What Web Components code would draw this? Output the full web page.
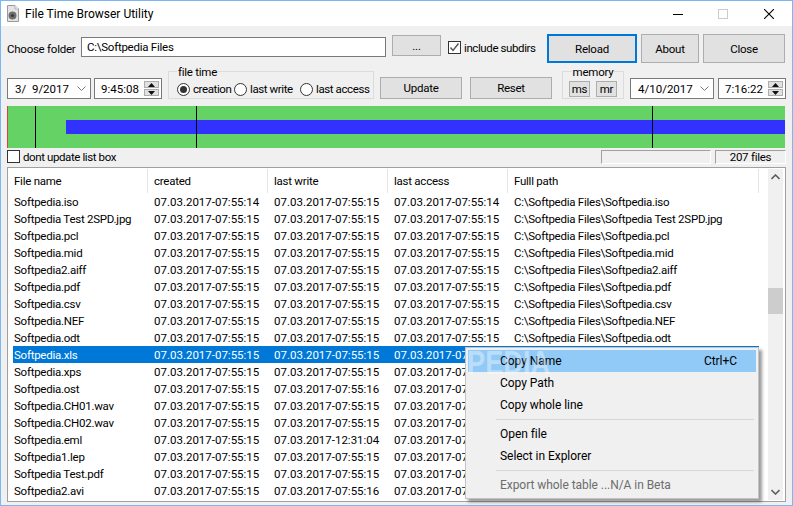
<!DOCTYPE html>
<html>
<head>
<meta charset="utf-8">
<title>File Time Browser Utility</title>
<style>
  html, body { margin: 0; padding: 0; background: #f0f0f0; }
  body { font: 11.5px Roboto, "Noto Sans", sans-serif; letter-spacing: -.25px; color: #000; }
</style>
</head>
<body>

<app-window>
  <title-bar slot="title">File Time Browser Utility</title-bar>

  <tool-row style="--top: 8px; --height: 29px">
    <span style="flex: none; width: 74px; align-self: center; white-space: nowrap">Choose folder</span>
    <text-field value="C:\Softpedia Files" style="width: 305px; height: 20px; margin-top: 3px"></text-field>
    <win-button style="width: 49px; height: 21px; margin: 1px 0 0 6px">...</win-button>
    <check-box checked style="margin: 7px 0 0 7px; width: 99px">include subdirs</check-box>
    <win-button focused style="width: 90px; height: 29px">Reload</win-button>
    <win-button style="width: 58px; height: 29px; margin-left: 4px">About</win-button>
    <win-button style="width: 82px; height: 29px; margin-left: 4px">Close</win-button>
  </tool-row>

  <tool-row style="--top: 8px; --height: 29px">
    <date-field value="3/  9/2017" style="margin-top: 7px"></date-field>
    <time-field value="9:45:08" style="margin: 7px 0 0 3px"></time-field>
    <group-box label="file time" style="width: 206px; margin: 0 0 1px 6px">
      <radio-button checked style="width: 57px">creation</radio-button>
      <radio-button style="width: 66px">last write</radio-button>
      <radio-button>last access</radio-button>
    </group-box>
    <win-button style="width: 82px; height: 22px; margin: 6px 0 0 6px">Update</win-button>
    <win-button style="width: 82px; height: 22px; margin: 6px 0 0 8px">Reset</win-button>
    <group-box label="memory" center style="width: 62px; margin: 0 0 1px 10px">
      <win-button style="width: 21px; height: 16px">ms</win-button>
      <win-button style="width: 21px; height: 16px; margin-left: 6px">mr</win-button>
    </group-box>
    <date-field value="4/10/2017" style="margin: 7px 0 0 6px"></date-field>
    <time-field value="7:16:22" style="margin: 7px 0 0 4px"></time-field>
  </tool-row>

  <time-line style="margin-top: 6px"></time-line>

  <tool-row style="--top: 2px; --height: 14px">
    <check-box style="width: 594px">dont update list box</check-box>
    <status-box style="width: 110px"></status-box>
    <status-box style="width: 71px; margin-left: 4px">207 files</status-box>
  </tool-row>

  <file-table></file-table>

  <context-menu></context-menu>
  <water-mark>PEDIA</water-mark>
</app-window>

<script>
class AppWindow extends HTMLElement {
  constructor() {
    super();
    this.attachShadow({mode: 'open'}).innerHTML = `
      <style>
        :host {
          display: block;
          position: relative;
          box-sizing: border-box;
          width: 793px;
          height: 506px;
          overflow: hidden;
          border: 1px solid #79b8f4;
          background: #f0f0f0;
        }
        .client { padding: 0 6px; }
      </style>
      <slot name="title"></slot>
      <div class="client"><slot></slot></div>
    `;
  }
}

class TitleBar extends HTMLElement {
  constructor() {
    super();
    this.attachShadow({mode: 'open'}).innerHTML = `
      <style>
        :host {
          display: flex;
          align-items: center;
          height: 25px;
          background: #fff;
          font-size: 12px;
          letter-spacing: 0;
        }
        .icon { margin-left: 5px; width: 13px; height: 17px; }
        .text { margin-left: 6px; flex: 1; }
        .ctl { width: 46px; height: 25px; display: flex; align-items: center; justify-content: center; }
      </style>
      <svg class="icon" viewBox="0 0 13 17">
        <path d="M1.5.5H9L12.5 4V16.5H1.5Z" fill="#e4e4e4" stroke="#9a9a9a"/>
        <path d="M9 .5V4H12.5" fill="#f5f5f5" stroke="#b4b4b4"/>
        <circle cx="6.5" cy="10.5" r="4" fill="#6f6f6f"/>
        <circle cx="6.5" cy="10.5" r="1.6" fill="#3c3c3c"/>
      </svg>
      <span class="text"><slot></slot></span>
      <div class="ctl" style="margin-right:-1px"><svg width="10" height="10"><path d="M0 5.5H10" stroke="#000"/></svg></div>
      <div class="ctl"><svg width="10" height="10"><rect x=".5" y=".5" width="9" height="9" fill="none" stroke="#ccc"/></svg></div>
      <div class="ctl"><svg width="10" height="10"><path d="M0 0L10 10M10 0L0 10" stroke="#000" stroke-width="1.1"/></svg></div>
    `;
  }
}

class ToolRow extends HTMLElement {
  constructor() {
    super();
    this.attachShadow({mode: 'open'}).innerHTML = `
      <style>
        :host {
          display: flex;
          align-items: flex-start;
          margin-top: var(--top, 0);
          height: var(--height, auto);
        }
      </style>
      <slot></slot>
    `;
  }
}

class WinButton extends HTMLElement {
  constructor() {
    super();
    this.attachShadow({mode: 'open'}).innerHTML = `
      <style>
        :host {
          display: flex;
          align-items: center;
          justify-content: center;
          flex: none;
          box-sizing: border-box;
          background: #e1e1e1;
          border: 1px solid #adadad;
        }
        :host([focused]) { border: 2px solid #0078d7; }
      </style>
      <slot></slot>
    `;
  }
}

class TextField extends HTMLElement {
  constructor() {
    super();
    this.attachShadow({mode: 'open'}).innerHTML = `
      <style>
        :host {
          display: flex;
          align-items: center;
          flex: none;
          box-sizing: border-box;
          padding-left: 5px;
          background: #fff;
          border: 1px solid #7a7a7a;
        }
      </style>
      <span>${this.getAttribute('value')}</span>
    `;
  }
}

class CheckBox extends HTMLElement {
  constructor() {
    super();
    const tick = this.hasAttribute('checked')
      ? '<path d="M2.5 6.5L5 9.5L10.5 2.5" fill="none" stroke="#555" stroke-width="1.4"/>' : '';
    this.attachShadow({mode: 'open'}).innerHTML = `
      <style>
        :host { display: flex; align-items: center; flex: none; white-space: nowrap; height: 13px; letter-spacing: -.4px; }
        svg { flex: none; margin-right: 3px; }
      </style>
      <svg width="13" height="13"><rect x=".5" y=".5" width="12" height="12" fill="#fff" stroke="#333"/>${tick}</svg>
      <span><slot></slot></span>
    `;
  }
}

class RadioButton extends HTMLElement {
  constructor() {
    super();
    const dot = this.hasAttribute('checked') ? '<circle cx="6.5" cy="6.5" r="3.5" fill="#333"/>' : '';
    this.attachShadow({mode: 'open'}).innerHTML = `
      <style>
        :host { display: flex; align-items: center; flex: none; white-space: nowrap; height: 13px; letter-spacing: -.4px; }
        svg { flex: none; margin-right: 3px; }
      </style>
      <svg width="13" height="13"><circle cx="6.5" cy="6.5" r="6" fill="#fff" stroke="#333"/>${dot}</svg>
      <span><slot></slot></span>
    `;
  }
}

class GroupBox extends HTMLElement {
  constructor() {
    super();
    const justify = this.hasAttribute('center') ? 'center' : 'flex-start';
    const legend = this.hasAttribute('center') ? 'margin: 0 auto' : 'margin-left: 8px';
    this.attachShadow({mode: 'open'}).innerHTML = `
      <style>
        :host {
          display: block;
          flex: none;
          box-sizing: border-box;
          height: 28px;
          border: 1px solid #dcdcdc;
        }
        .legend {
          display: block;
          width: max-content;
          ${legend};
          margin-top: -7px;
          padding: 0 1px;
          height: 14px;
          line-height: 14px;
          background: #f0f0f0;
        }
        .body {
          display: flex;
          align-items: center;
          justify-content: ${justify};
          height: 16px;
          margin-top: 2px;
          padding-left: 8px;
        }
        :host([center]) .body { padding-left: 0; }
      </style>
      <span class="legend">${this.getAttribute('label')}</span>
      <div class="body"><slot></slot></div>
    `;
  }
}

class SpinBox extends HTMLElement {
  constructor() {
    super();
    this.attachShadow({mode: 'open'}).innerHTML = `
      <style>
        :host { display: flex; flex-direction: column; gap: 1px; flex: none; width: 15px; height: 15px; }
        div { flex: 1; background: #e1e1e1; border: 1px solid #adadad; display: flex; align-items: center; justify-content: center; box-sizing: border-box; }
      </style>
      <div><svg width="7" height="4"><path d="M3.5 0L7 4H0Z" fill="#111"/></svg></div>
      <div><svg width="7" height="4"><path d="M0 0H7L3.5 4Z" fill="#111"/></svg></div>
    `;
  }
}

class DateField extends HTMLElement {
  constructor() {
    super();
    this.attachShadow({mode: 'open'}).innerHTML = `
      <style>
        :host {
          display: flex;
          align-items: center;
          flex: none;
          box-sizing: border-box;
          width: 84px;
          height: 21px;
          padding-left: 7px;
          background: #fff;
          border: 1px solid #7a7a7a;
          letter-spacing: 0;
        }
        span { flex: 1; white-space: pre; }
        svg { margin-right: 4px; }
      </style>
      <span>${this.getAttribute('value')}</span>
      <svg width="9" height="6"><path d="M.5 .5L4.5 4.5L8.5 .5" fill="none" stroke="#777"/></svg>
    `;
  }
}

class TimeField extends HTMLElement {
  constructor() {
    super();
    this.attachShadow({mode: 'open'}).innerHTML = `
      <style>
        :host {
          display: flex;
          align-items: center;
          flex: none;
          box-sizing: border-box;
          width: 68px;
          height: 21px;
          padding: 0 2px 0 6px;
          background: #fff;
          border: 1px solid #7a7a7a;
          letter-spacing: 0;
        }
        span { flex: 1; }
      </style>
      <span>${this.getAttribute('value')}</span>
      <spin-box></spin-box>
    `;
  }
}

class TimeLine extends HTMLElement {
  constructor() {
    super();
    this.attachShadow({mode: 'open'}).innerHTML = `
      <style>
        :host {
          display: block;
          position: relative;
          width: 778px;
          height: 42px;
          background: #64d264;
        }
        .span { position: absolute; left: 59px; right: 0; top: 14px; height: 14px; background: #3232ff; }
        .tick { position: absolute; top: 0; width: 1px; height: 42px; background: #000; }
      </style>
      <div class="span"></div>
      <div class="tick" style="left: 0; background: #e04040"></div>
      <div class="tick" style="left: 28px"></div>
      <div class="tick" style="left: 189px"></div>
      <div class="tick" style="left: 645px"></div>
    `;
  }
}

class StatusBox extends HTMLElement {
  constructor() {
    super();
    this.attachShadow({mode: 'open'}).innerHTML = `
      <style>
        :host {
          display: flex;
          align-items: center;
          justify-content: center;
          flex: none;
          box-sizing: border-box;
          height: 14px;
          border: 1px solid;
          border-color: #a0a0a0 #fff #fff #a0a0a0;
        }
      </style>
      <slot></slot>
    `;
  }
}

const T1 = '07.03.2017-07:55:14';
const T5 = '07.03.2017-07:55:15';
const T6 = '07.03.2017-07:55:16';
// rows from Softpedia.xls down lie under the context menu: only the start of "last access" shows
const CUT = '07.03.2017-07';
const FILES = [
  ['Softpedia.iso', T1, T5, T1, true],
  ['Softpedia Test 2SPD.jpg', T5, T5, T5, true],
  ['Softpedia.pcl', T5, T5, T5, true],
  ['Softpedia.mid', T5, T5, T5, true],
  ['Softpedia2.aiff', T5, T5, T5, true],
  ['Softpedia.pdf', T5, T5, T5, true],
  ['Softpedia.csv', T5, T5, T5, true],
  ['Softpedia.NEF', T5, T5, T5, true],
  ['Softpedia.odt', T5, T5, T5, true],
  ['Softpedia.xls', T5, T5, CUT],
  ['Softpedia.xps', T5, T5, CUT],
  ['Softpedia.ost', T5, T6, CUT],
  ['Softpedia.CH01.wav', T5, T5, CUT],
  ['Softpedia.CH02.wav', T5, T5, CUT],
  ['Softpedia.eml', T5, '07.03.2017-12:31:04', CUT],
  ['Softpedia1.lep', T5, T5, CUT],
  ['Softpedia Test.pdf', T5, T5, CUT],
  ['Softpedia2.avi', T5, T6, CUT]
];

class FileTable extends HTMLElement {
  constructor() {
    super();
    const rows = FILES.map(([name, created, write, access, path], i) => `
      <div class="line${i === 9 ? ' selected' : ''}">
        <span>${name}</span><span class="t">${created}</span><span class="t">${write}</span><span class="t">${access}</span>
        <span>${path ? `C:\\Softpedia Files\\${name}` : ''}</span>
      </div>`).join('');
    this.attachShadow({mode: 'open'}).innerHTML = `
      <style>
        :host {
          display: flex;
          box-sizing: border-box;
          width: 779px;
          height: 335px;
          margin-top: 3px;
          background: #fff;
          border: 1px solid #a0a0a0;
          white-space: nowrap;
        }
        .list { flex: 1; padding-left: 5px; }
        .line, .head {
          display: grid;
          grid-template-columns: 135px 120px 120px 120px 251px;
          height: 17px;
          line-height: 19px;
          width: 746px;
        }
        .line span, .head span { padding-left: 6px; overflow: hidden; height: 17px; }
        .line span:first-child, .head span:first-child { padding-left: 1px; }
        .line .t { letter-spacing: 0; }
        .head { height: 25px; }
        .head span { box-shadow: inset -1px 0 0 #e5e5e5; margin-top: 1px; height: 24px; line-height: 24px; }
        .selected { background: #0078d7; color: #fff; }
        .scroll {
          display: flex;
          flex-direction: column;
          justify-content: space-between;
          align-items: center;
          box-sizing: border-box;
          width: 15px;
          margin: 1px 2px 1px 0;
          padding: 5px 0;
          background: #f0f0f0;
          position: relative;
        }
        .thumb { position: absolute; left: 0; top: 119px; width: 15px; height: 26px; background: #cdcdcd; }
      </style>
      <div class="list">
        <div class="head">
          <span>File name</span><span>created</span><span>last write</span><span>last access</span><span>Fulll path</span>
        </div>
        ${rows}
      </div>
      <div class="scroll">
        <svg width="9" height="6"><path d="M.5 5L4.5 1L8.5 5" fill="none" stroke="#606060" stroke-width="1.6"/></svg>
        <div class="thumb"></div>
        <svg width="9" height="6"><path d="M.5 1L4.5 5L8.5 1" fill="none" stroke="#606060" stroke-width="1.6"/></svg>
      </div>
    `;
  }
}

class ContextMenu extends HTMLElement {
  constructor() {
    super();
    this.attachShadow({mode: 'open'}).innerHTML = `
      <style>
        :host {
          display: block;
          position: absolute;
          left: 464px;
          top: 346px;
          box-sizing: border-box;
          width: 294px;
          height: 152px;
          padding: 2px;
          background: #f0f0f0;
          border: 1px solid #c4c4c4;
          box-shadow: 3px 3px 3px rgba(0, 0, 0, .4);
          white-space: nowrap;
          font-size: 12px;
          letter-spacing: -.05px;
        }
        .item { display: flex; justify-content: space-between; height: 22px; line-height: 22px; padding: 0 19px 0 32px; }
        .item.hover { background: #91c9f7; }
        .item.off { color: #6d6d6d; }
        .sep { height: 1px; margin: 3px 2px 3px 28px; background: #d7d7d7; }
      </style>
      <div class="item hover"><span>Copy Name</span><span>Ctrl+C</span></div>
      <div class="item"><span>Copy Path</span></div>
      <div class="item"><span>Copy whole line</span></div>
      <div class="sep"></div>
      <div class="item"><span>Open file</span></div>
      <div class="item"><span>Select in Explorer</span></div>
      <div class="sep"></div>
      <div class="item off"><span>Export whole table ...N/A in Beta</span></div>
    `;
  }
}

class WaterMark extends HTMLElement {
  constructor() {
    super();
    this.attachShadow({mode: 'open'}).innerHTML = `
      <style>
        :host {
          display: block;
          position: absolute;
          left: 466px;
          top: 348px;
          transform: scaleX(.8);
          transform-origin: left top;
          font: bold 34px/26px "Liberation Sans", sans-serif;
          letter-spacing: 0;
          color: rgba(255, 255, 255, .4);
          pointer-events: none;
        }
      </style>
      <slot></slot>
    `;
  }
}

customElements.define('app-window', AppWindow);
customElements.define('title-bar', TitleBar);
customElements.define('tool-row', ToolRow);
customElements.define('win-button', WinButton);
customElements.define('text-field', TextField);
customElements.define('check-box', CheckBox);
customElements.define('radio-button', RadioButton);
customElements.define('group-box', GroupBox);
customElements.define('spin-box', SpinBox);
customElements.define('date-field', DateField);
customElements.define('time-field', TimeField);
customElements.define('time-line', TimeLine);
customElements.define('status-box', StatusBox);
customElements.define('file-table', FileTable);
customElements.define('context-menu', ContextMenu);
customElements.define('water-mark', WaterMark);
</script>
</body>
</html>
